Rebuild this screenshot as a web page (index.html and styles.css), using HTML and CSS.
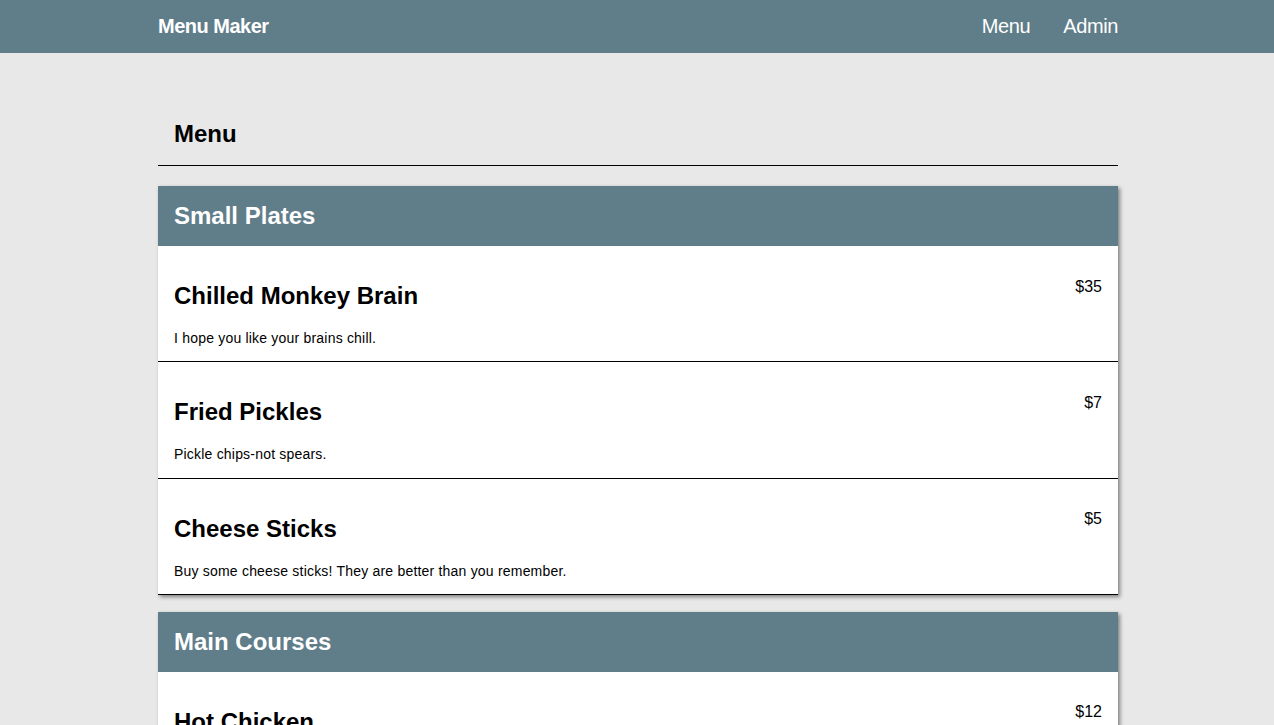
FILE: index.html
```html
<!DOCTYPE html>
<html>
<head>
<meta charset="utf-8">
<title>Menu Maker</title>
<link rel="stylesheet" href="styles.css">
</head>
<body>
<header class="topbar">
  <div class="wrap topbar-inner">
    <a class="brand" href="#">Menu Maker</a>
    <nav class="nav">
      <a href="#">Menu</a>
      <a href="#">Admin</a>
    </nav>
  </div>
</header>
<main class="wrap main">
  <h1 class="page-title">Menu</h1>
  <section class="card">
    <h2 class="card-title">Small Plates</h2>
    <div class="item">
      <div class="item-text">
        <h3>Chilled Monkey Brain</h3>
        <p>I hope you like your brains chill.</p>
      </div>
      <div class="price">$35</div>
    </div>
    <div class="item">
      <div class="item-text">
        <h3>Fried Pickles</h3>
        <p>Pickle chips-not spears.</p>
      </div>
      <div class="price">$7</div>
    </div>
    <div class="item">
      <div class="item-text">
        <h3>Cheese Sticks</h3>
        <p>Buy some cheese sticks! They are better than you remember.</p>
      </div>
      <div class="price">$5</div>
    </div>
  </section>
  <section class="card">
    <h2 class="card-title">Main Courses</h2>
    <div class="item">
      <div class="item-text">
        <h3>Hot Chicken</h3>
        <p>Nashville style, extra hot.</p>
      </div>
      <div class="price">$12</div>
    </div>
  </section>
</main>
</body>
</html>
```
FILE: styles.css
```css
* { box-sizing: border-box; }
html, body { margin: 0; padding: 0; }
body {
  background: #e8e8e8;
  font-family: "Liberation Sans", Arial, Helvetica, sans-serif;
  color: #000;
}
.wrap {
  width: 960px;
  margin: 0 auto;
  position: relative;
  left: 1px;
}
.topbar {
  background: #607d8a;
  height: 53px;
}
.topbar-inner {
  height: 53px;
  display: flex;
  align-items: center;
  justify-content: space-between;
}
.brand {
  color: #fff;
  text-decoration: none;
  font-weight: bold;
  font-size: 20px;
  letter-spacing: -0.5px;
}
.nav {
  display: flex;
  gap: 33px;
}
.nav a {
  color: #fff;
  text-decoration: none;
  font-size: 20px;
  letter-spacing: -0.4px;
}
.main {
  padding-top: 50px;
}
.page-title {
  margin: 0 0 20px;
  padding: 17px 16px;
  font-size: 24px;
  line-height: 28px;
  border-bottom: 1px solid #000;
}
.card {
  background: #fff;
  box-shadow: 2px 2px 4px rgba(0, 0, 0, 0.45);
  margin-bottom: 16.5px;
}
.card-title {
  margin: 0;
  background: #607d8a;
  color: #fff;
  height: 60px;
  display: flex;
  align-items: center;
  padding: 0 16px;
  font-size: 24px;
}
.item {
  display: flex;
  justify-content: space-between;
  padding: 0 16px 15.4px;
  border-bottom: 1px solid #000;
}
.item h3 {
  margin: 36px 0 0;
  font-size: 24px;
  line-height: 28px;
}
.item p {
  margin: 20px 0 0;
  font-size: 14px;
  line-height: 16px;
  letter-spacing: 0.2px;
}
.price {
  margin-top: 31.5px;
  font-size: 16px;
  line-height: 18px;
}
```
